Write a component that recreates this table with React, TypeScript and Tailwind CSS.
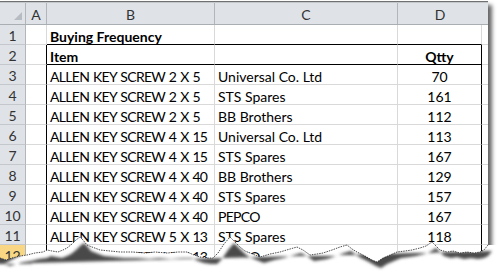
import React from "react"

const rows = [
  { n: 3, item: "ALLEN KEY SCREW 2 X 5", vendor: "Universal Co. Ltd", qty: "70" },
  { n: 4, item: "ALLEN KEY SCREW 2 X 5", vendor: "STS Spares", qty: "161" },
  { n: 5, item: "ALLEN KEY SCREW 2 X 5", vendor: "BB Brothers", qty: "112" },
  { n: 6, item: "ALLEN KEY SCREW 4 X 15", vendor: "Universal Co. Ltd", qty: "113" },
  { n: 7, item: "ALLEN KEY SCREW 4 X 15", vendor: "STS Spares", qty: "167" },
  { n: 8, item: "ALLEN KEY SCREW 4 X 40", vendor: "BB Brothers", qty: "129" },
  { n: 9, item: "ALLEN KEY SCREW 4 X 40", vendor: "STS Spares", qty: "157" },
  { n: 10, item: "ALLEN KEY SCREW 4 X 40", vendor: "PEPCO", qty: "167" },
  { n: 11, item: "ALLEN KEY SCREW 5 X 13", vendor: "STS Spares", qty: "118" },
  { n: 12, item: "ALLEN KEY SCREW 5 X 13", vendor: "PEPCO", qty: "142" },
]

// torn paper edge, left to right
const tear: [number, number][] = [
  [0, 258], [6, 260], [12, 258], [20, 256], [27, 255], [35, 253], [43, 252], [47, 250], [52, 251],
  [58, 252], [63, 250], [67, 248], [72, 244], [76, 240], [80, 237], [83, 240], [87, 245], [92, 247],
  [100, 250], [110, 251], [120, 252], [133, 252], [145, 253], [155, 252], [167, 253], [178, 252],
  [187, 252], [194, 255], [200, 257], [207, 258], [213, 258], [218, 253], [224, 244], [230, 237],
  [235, 242], [240, 247], [245, 251], [250, 253], [260, 257], [270, 254], [280, 252], [290, 249],
  [297, 247], [303, 250], [310, 255], [317, 254], [323, 253], [332, 250], [340, 247], [347, 245],
  [352, 249], [357, 252], [365, 256], [372, 260], [377, 262], [383, 258], [390, 255], [397, 252],
  [405, 251], [412, 250], [420, 248], [426, 246], [432, 242], [436, 246], [440, 250], [447, 252],
  [453, 251], [460, 253], [467, 252], [474, 253], [480, 252], [484, 250], [488, 245],
]

const line = tear.map(([x, y], i) => `${i ? "L" : "M"}${x} ${y}`).join(" ")
const shifted = tear.map(([x, y]) => `L${x + 4} ${y + 6}`).join(" ")

function TornEdge() {
  return (
    <svg className="absolute left-0 top-0 pointer-events-none" width="497" height="276" viewBox="0 0 497 276">
      <defs>
        <clipPath id="below">
          <path d={`${line} L497 245 L497 276 L0 276 Z`} />
        </clipPath>
        <filter id="blur" x="-10%" y="-10%" width="120%" height="120%">
          <feGaussianBlur stdDeviation="1.8" />
        </filter>
      </defs>
      <path d={`${line} L497 245 L497 276 L0 276 Z`} fill="#fff" />
      <g clipPath="url(#below)">
        <path d={`M-10 0 L492 0 ${shifted} L-10 264 Z`} fill="#4a4a4a" filter="url(#blur)" />
      </g>
      <path d={line} fill="none" stroke="#222" strokeWidth="0.8" strokeDasharray="1.5 1" />
    </svg>
  )
}

const hdr = "flex items-center justify-center pt-[2px] border-r border-[#b2b6bb] text-[#333]"
const cell = "flex items-center px-[3px] pt-[4px] border-r border-b border-[#d9d9d9] whitespace-nowrap overflow-hidden"
const caps = "tracking-[-0.7px] [word-spacing:1px]"

export default function App() {
  return (
    <div className="relative w-[497px] h-[276px] overflow-hidden bg-white font-['Lato',sans-serif] text-[14px] text-black">
      <div className="w-[488px] h-[290px] mt-px border-t border-[#707070] bg-white shadow-[4px_4px_4px_rgba(0,0,0,0.6)]">
        <div className="flex h-[23px] bg-[#dfe3e8] border-t border-[#c4c7cb] border-b border-b-[#a9aeb3]">
          <div className={`${hdr} w-[26px] relative`}>
            <svg className="absolute right-[3px] bottom-[4px]" width="8" height="8" viewBox="0 0 8 8">
              <path d="M8 0 L8 8 L0 8 Z" fill="#b7bcc2" />
            </svg>
          </div>
          <div className={`${hdr} w-[21px]`}>A</div>
          <div className={`${hdr} w-[168px]`}>B</div>
          <div className={`${hdr} w-[183px]`}>C</div>
          <div className={`${hdr} w-[84px] border-r-0`}>D</div>
          <div className="flex-1" />
        </div>

        {/* row 1 */}
        <div className="flex h-[20px]">
          <div className={`${hdr} w-[26px] bg-[#dfe3e8] border-b border-b-[#c4c8cd]`}>1</div>
          <div className={`${cell} w-[21px]`} />
          <div className={`${cell} w-[168px] border-b-black font-bold`}>Buying Frequency</div>
          <div className={`${cell} w-[183px] border-b-black`} />
          <div className={`${cell} w-[84px] border-b-black`} />
          <div className={`${cell} flex-1 border-r-0`} />
        </div>

        {/* row 2 */}
        <div className="flex h-[20px]">
          <div className={`${hdr} w-[26px] bg-[#dfe3e8] border-b border-b-[#c4c8cd]`}>2</div>
          <div className={`${cell} w-[21px] border-r-black`} />
          <div className={`${cell} w-[168px] border-b-black font-bold`}>Item</div>
          <div className={`${cell} w-[183px] border-b-black`} />
          <div className={`${cell} w-[84px] border-b-black border-r-black justify-center font-bold`}>Qtty</div>
          <div className={`${cell} flex-1 border-r-0`} />
        </div>

        {rows.map((r) => (
          <div key={r.n} className="flex h-[20px]">
            <div className={`${hdr} w-[26px] border-b border-b-[#c4c8cd] ${r.n === 12 ? "bg-[#f8d684]" : "bg-[#dfe3e8]"}`}>{r.n}</div>
            <div className={`${cell} w-[21px] border-r-black`} />
            <div className={`${cell} w-[168px] ${caps}`}>{r.item}</div>
            <div className={`${cell} w-[183px] ${r.vendor === "PEPCO" ? caps : ""}`}>{r.vendor}</div>
            <div className={`${cell} w-[84px] border-r-black justify-center`}>{r.qty}</div>
            <div className={`${cell} flex-1 border-r-0`} />
          </div>
        ))}
      </div>
      <TornEdge />
    </div>
  )
}
